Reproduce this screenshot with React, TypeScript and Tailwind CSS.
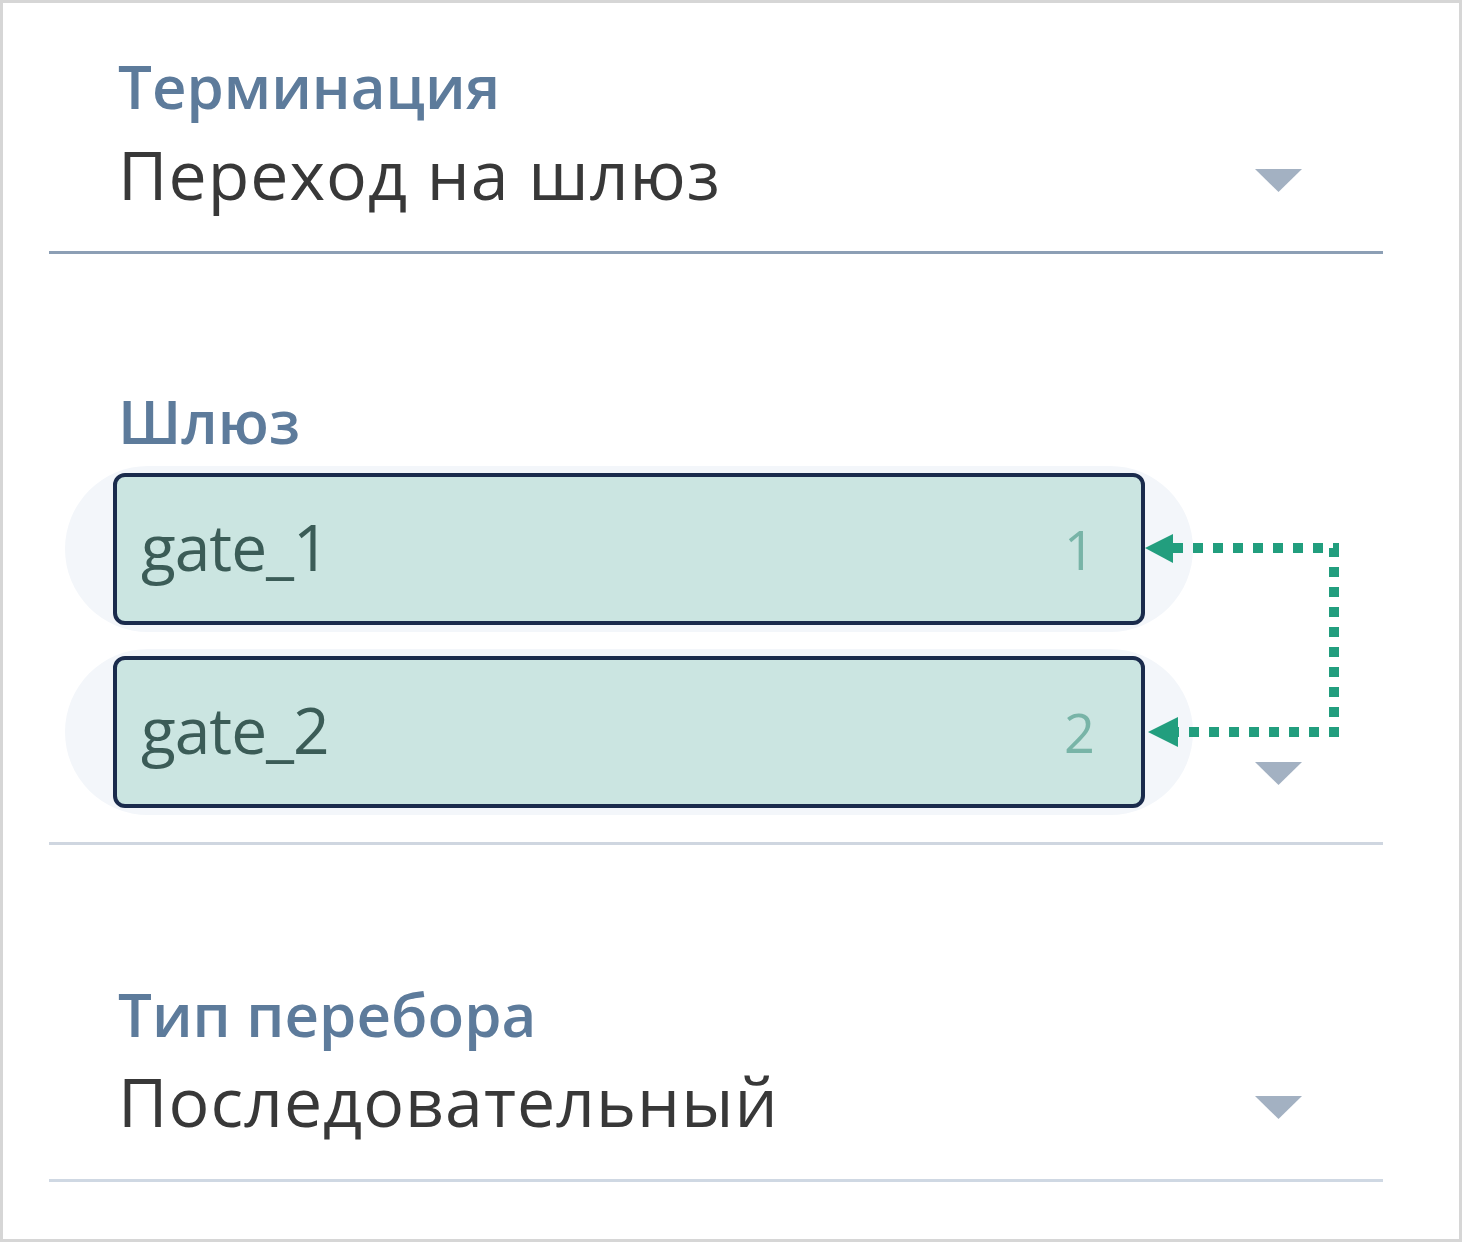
import React from "react";

const font = { fontFamily: '"Open Sans", "Noto Sans", sans-serif' };

function Caret({ className = "" }: { className?: string }) {
  return (
    <svg width="47" height="23" viewBox="0 0 47 23" className={className}>
      <polygon points="0,0 47,0 23.5,23" fill="#a3b1c2" />
    </svg>
  );
}

function GateRow({ name, index }: { name: string; index: number }) {
  return (
    <div className="rounded-full bg-[#f3f6fa] px-[48px] py-[7px]">
      <div className="flex h-[152px] items-center justify-between rounded-[12px] border-[4px] border-[#1a2b4c] bg-[#cbe5e1] pl-[24px] pr-[46px]">
        <span className="translate-y-[-2px] text-[64px] leading-none tracking-[-1px] text-[#3b5c57]">
          {name}
        </span>
        <span className="text-[54px] leading-none text-[#78b4a7]">{index}</span>
      </div>
    </div>
  );
}

function OrderArrows() {
  // dotted connector linking the two gates, each end pointing back at a row
  return (
    <svg
      width="210"
      height="240"
      viewBox="0 0 210 240"
      className="pointer-events-none absolute left-[1075px] top-[54px]"
    >
      <path
        d="M33 28 H194 V212 H38"
        fill="none"
        stroke="#229e7e"
        strokeWidth="10"
        strokeDasharray="10 10"
      />
      <polygon points="5,28 33,14 33,43" fill="#229e7e" />
      <polygon points="8,212 38,197 38,227" fill="#229e7e" />
    </svg>
  );
}

export default function App() {
  return (
    <div
      style={font}
      className="box-border h-[1242px] w-[1462px] border-[3px] border-[#d6d6d6] bg-white"
    >
      <div className="ml-[46px] w-[1334px] pt-[52px]">
        {/* Termination */}
        <div className="border-b-[3px] border-[#8c9fb5] pb-[44px]">
          <div className="pl-[69px] text-[60px] font-semibold leading-[62px] text-[#5d7b9b]">
            Терминация
          </div>
          <div className="mt-[23px] flex items-center justify-between pl-[69px] pr-[81px]">
            <span className="text-[68px] leading-[67px] tracking-[1px] text-[#383838]">
              Переход на шлюз
            </span>
            <Caret className="mt-[13px]" />
          </div>
        </div>

        {/* Gateways */}
        <div className="mt-[136px] border-b-[3px] border-[#cfd6e0] pb-[27px]">
          <div className="pl-[69px] text-[60px] font-semibold leading-[62px] text-[#5d7b9b]">
            Шлюз
          </div>
          <div className="mt-[14px] flex items-end pr-[81px]">
            <div className="relative ml-[16px] flex w-[1128px] flex-col gap-[17px]">
              <GateRow name="gate_1" index={1} />
              <GateRow name="gate_2" index={2} />
              <OrderArrows />
            </div>
            <div className="flex-1" />
            <Caret className="mb-[30px]" />
          </div>
        </div>

        {/* Iteration type */}
        <div className="mt-[138px] border-b-[3px] border-[#cfd8e3] pb-[45px]">
          <div className="pl-[69px] text-[60px] font-semibold leading-[62px] text-[#5d7b9b]">
            Тип перебора
          </div>
          <div className="mt-[22px] flex items-center justify-between pl-[69px] pr-[81px]">
            <span className="text-[68px] leading-[67px] tracking-[1px] text-[#383838]">
              Последовательный
            </span>
            <Caret className="mt-[13px]" />
          </div>
        </div>
      </div>
    </div>
  );
}
